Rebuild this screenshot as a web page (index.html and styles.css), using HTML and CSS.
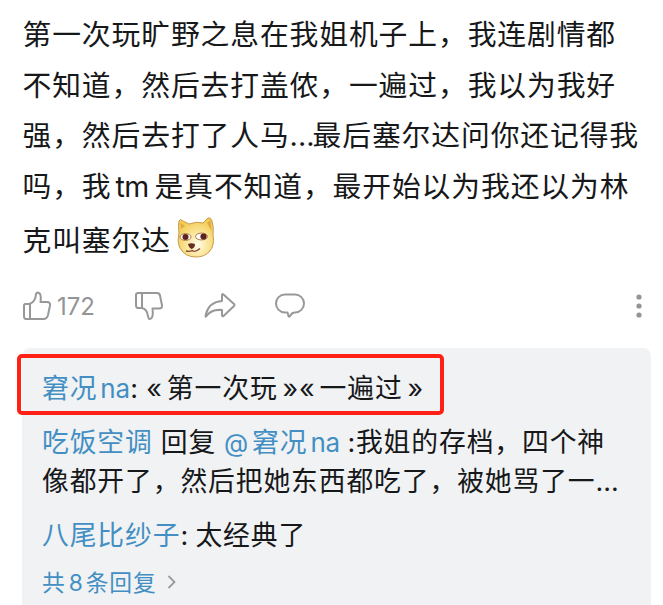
FILE: index.html
```html
<!DOCTYPE html>
<html lang="zh-CN">
<head>
<meta charset="utf-8">
<title>评论</title>
<link rel="stylesheet" href="styles.css">
</head>
<body>
<main class="comment">
  <div class="content">
    <p>第一次玩旷野之息在我姐机子上，我连剧情都</p>
    <p>不知道，然后去打盖侬，一遍过，我以为我好</p>
    <p>强，然后去打了人马<span class="dots">...</span>最后塞尔达问你还记得我</p>
    <p>吗，我<span class="tm">tm</span>是真不知道，最开始以为我还以为林</p>
    <p class="last">克叫塞尔达<svg class="doge" viewBox="0 0 38 42" width="38" height="42">
      <defs><radialGradient id="fur" cx=".55" cy=".68" r=".65"><stop offset="0" stop-color="#fffbed"/><stop offset=".4" stop-color="#fbe9a5"/><stop offset="1" stop-color="#f3cc50"/></radialGradient></defs>
      <path d="M2 4Q3 1 6 4L12 7Q20 4 26 6L31 1Q34 0 35 4Q37 10 36 18Q38 29 32 35Q27 40 19 40Q8 40 3 31Q0 25 2 16Q1 9 2 4Z" fill="url(#fur)" stroke="#c99b4b"/>
      <path d="M3.500 6L8 9L4 12ZM30 6L33.500 3L34.500 14Z" fill="#dfa94c"/>
      <ellipse cx="8.500" cy="20" rx="5.500" ry="3.400" fill="#fff" stroke="#a06a3c" stroke-width=".9"/>
      <ellipse cx="24.500" cy="19.500" rx="6" ry="3.400" fill="#fff" stroke="#a06a3c" stroke-width=".9"/>
      <circle cx="8.500" cy="20" r="3" fill="#5d231b"/><circle cx="26.500" cy="19.500" r="3.100" fill="#5d231b"/>
      <path d="M11 27Q14 25.500 18 27Q18 31 14.500 32Q12 31 11 27Z" fill="#672d20"/>
      <path d="M9 34Q13 35 15 33.500Q18 36 23 31.500" fill="none" stroke="#8b493b" stroke-width="1.400"/>
    </svg></p>
  </div>
  <div class="actions">
    <svg class="up" viewBox="0 0 30 30" width="30" height="30"><path d="M2.500 13H7.500Q13.500 11 14 3Q15 1 17 2Q19.500 3 18.500 11H25Q28.500 11 28 14.500L26 24Q25 28 21.500 28H4Q2 28 2 25V14.500Q2 13 3.500 13M8 13V28"/></svg>
    <span class="count">172</span>
    <svg class="down" viewBox="0 0 30 30" width="30" height="30"><path d="M8 2V17M3.500 2H23Q25.500 2 26 4.500L28 14.500Q28.500 17.500 25 17.500H18.500Q19.500 26 17 27.500Q14.500 29 14 25Q13 18 8 17H4Q2 17 2 14V4Q2 2 4 2"/></svg>
    <svg class="share" viewBox="0 0 32 28" width="32" height="28"><path d="M18 9V3Q18 1.500 19.500 2.500L30 12Q31 13 30 14L19.500 24Q18 25 18 23V18Q7 17 2.500 24Q1 26 2 22Q5 10 18 9Z"/></svg>
    <svg class="reply" viewBox="0 0 32 28" width="32" height="28"><path d="M11 2.500H21A9 9 0 0 1 21 20.500L18.500 21L15.500 24.500Q15 25 14.500 24L13.500 20.500H11A9 9 0 0 1 11 2.500Z"/></svg>
    <svg class="more" viewBox="0 0 6 24" width="6" height="24"><circle cx="3" cy="3" r="2.600"/><circle cx="3" cy="12" r="2.600"/><circle cx="3" cy="21" r="2.600"/></svg>
  </div>
  <section class="replies">
    <div class="marked"><p><a>窘况<span class="na">na</span></a><span class="colon">:</span><span class="open">«</span>第一次玩<span class="close">»</span><span class="open second">«</span>一遍过<span class="close">»</span></p></div>
    <p class="thread"><a>吃饭空调</a><span class="verb">回复</span><a><span class="at">@</span>窘况<span class="na">na</span></a><span class="colon before">:</span>我姐的存档，四个神</p>
    <p class="thread">像都开了，然后把她东西都吃了，被她骂了一<span class="dots">...</span></p>
    <p class="third"><a>八尾比纱子</a><span class="colon after">:</span>太经典了</p>
    <p class="total"><a>共<span class="num">8</span>条回复</a><svg viewBox="0 0 10 16" width="10" height="16"><path d="M1.500 2L7.500 8L1.500 14"/></svg></p>
  </section>
</main>
</body>
</html>
```
FILE: styles.css
```css
* { box-sizing: border-box; }
body { margin: 0; background: #fff; color: #17181a; font-family: Inter, "Noto Sans CJK SC", sans-serif; overflow: hidden; }
p { margin: 0; white-space: nowrap; }
svg { flex: none; }
.comment { width: 663px; height: 605px; overflow: hidden; display: flex; flex-direction: column; }
.content { height: 280px; padding: 10.4px 0 0 22.5px; font-size: 28.8px; letter-spacing: .88px; }
.content p { height: 50.5px; line-height: 50.5px; }
.content .last { display: flex; height: 57px; line-height: 57px; }
.doge { margin: 5px 0 0 6px; }
.dots { display: inline-block; width: 23px; letter-spacing: 0; }
.tm { display: inline-block; width: 43px; padding-left: 4px; font-size: 28.5px; letter-spacing: -.5px; }
.actions { display: flex; align-items: center; height: 52px; padding: 0 21px 0 22px; color: #929497; }
.actions svg path { fill: none; stroke: #96989a; stroke-width: 2; stroke-linejoin: round; }
.count { width: 42px; margin-left: 5px; font-size: 24px; }
.down { margin-left: 35px; }
.share { margin-left: 40px; }
.reply { margin-left: 38px; }
.more { margin-left: auto; fill: #929497; }
.replies { width: 629px; height: 257px; margin: 16px 0 0 22px; padding-top: 5.5px; border-radius: 8px 8px 0 0; background: #f1f2f4; font-size: 26.8px; letter-spacing: .88px; }
.replies a { color: #438fc3; }
.marked { width: 427px; height: 61px; margin-left: -5.5px; padding-left: 21.5px; border: 4px solid #ff2116; border-radius: 5px; }
.marked p { line-height: 61px; }
.thread { height: 39px; padding-left: 20px; line-height: 39px; }
.marked + .thread { margin-top: 8px; }
.na { display: inline-block; width: 33px; padding-left: 3px; font-size: 26px; letter-spacing: -.3px; }
.colon { display: inline-block; width: 16px; letter-spacing: 0; }
.open { display: inline-block; width: 20.5px; letter-spacing: 0; }
.close { display: inline-block; width: 21.5px; padding-left: 5px; letter-spacing: 0; }
.verb { margin: 0 8px; }
.at { display: inline-block; width: 28px; font-size: 25px; letter-spacing: 0; }
.before { width: 15.5px; padding-left: 7px; }
.after { width: 15px; }
.third { height: 54px; padding: 7px 0 0 20px; line-height: 54px; }
.total { display: flex; align-items: center; height: 40px; padding-left: 20px; margin-top: 7px; font-size: 22.8px; }
.num { display: inline-block; width: 20px; padding-left: 3px; letter-spacing: 0; }
.total svg { margin-left: 10px; fill: none; stroke: #999b9e; stroke-width: 1.8; }
```
